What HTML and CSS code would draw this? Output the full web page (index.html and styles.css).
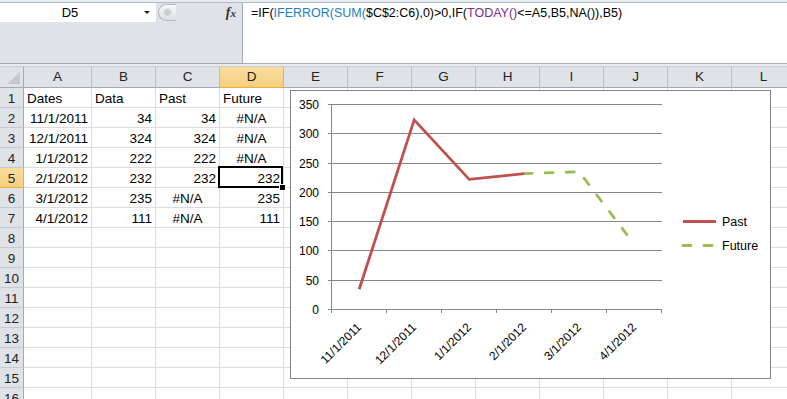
FILE: index.html
```html
<!DOCTYPE html>
<html>
<head>
    <title>Past / Future chart</title>
    <meta charset="UTF-8">
    <link rel="stylesheet" href="styles.css">
</head>
<body>
    <div class="top">
        <div class="bar">
            <div class="left">
                <div class="namerow">
                    <div class="namebox"><span class="name">D5</span><span class="drop"></span></div>
                    <div class="handle"><span class="dot"></span></div>
                    <div class="fx">f<i>x</i></div>
                </div>
            </div>
            <div class="formula">=IF(<span class="f1">IFERROR(SUM(</span>$C$2:C6),0)&gt;0,IF(<span class="f2">TODAY()</span>&lt;=A5,B5,NA()),B5)</div>
        </div>
    </div>

    <div class="sheet">
        <div class="corner"><span class="tri"></span></div>
        <div class="ch">A</div><div class="ch">B</div><div class="ch">C</div><div class="ch on">D</div><div class="ch">E</div><div class="ch">F</div><div class="ch">G</div><div class="ch">H</div><div class="ch">I</div><div class="ch">J</div><div class="ch">K</div><div class="ch">L</div>

        <div class="rh">1</div><div class="c">Dates</div><div class="c">Data</div><div class="c">Past</div><div class="c">Future</div><div class="c"></div><div class="c"></div><div class="c"></div><div class="c"></div><div class="c"></div><div class="c"></div><div class="c"></div><div class="c"></div>
        <div class="rh">2</div><div class="c r">11/1/2011</div><div class="c r">34</div><div class="c r">34</div><div class="c m">#N/A</div><div class="c"></div><div class="c"></div><div class="c"></div><div class="c"></div><div class="c"></div><div class="c"></div><div class="c"></div><div class="c"></div>
        <div class="rh">3</div><div class="c r">12/1/2011</div><div class="c r">324</div><div class="c r">324</div><div class="c m">#N/A</div><div class="c"></div><div class="c"></div><div class="c"></div><div class="c"></div><div class="c"></div><div class="c"></div><div class="c"></div><div class="c"></div>
        <div class="rh">4</div><div class="c r">1/1/2012</div><div class="c r">222</div><div class="c r">222</div><div class="c m">#N/A</div><div class="c"></div><div class="c"></div><div class="c"></div><div class="c"></div><div class="c"></div><div class="c"></div><div class="c"></div><div class="c"></div>
        <div class="rh on">5</div><div class="c r">2/1/2012</div><div class="c r">232</div><div class="c r">232</div><div class="c r">232</div><div class="c"></div><div class="c"></div><div class="c"></div><div class="c"></div><div class="c"></div><div class="c"></div><div class="c"></div><div class="c"></div>
        <div class="rh">6</div><div class="c r">3/1/2012</div><div class="c r">235</div><div class="c m">#N/A</div><div class="c r">235</div><div class="c"></div><div class="c"></div><div class="c"></div><div class="c"></div><div class="c"></div><div class="c"></div><div class="c"></div><div class="c"></div>
        <div class="rh">7</div><div class="c r">4/1/2012</div><div class="c r">111</div><div class="c m">#N/A</div><div class="c r">111</div><div class="c"></div><div class="c"></div><div class="c"></div><div class="c"></div><div class="c"></div><div class="c"></div><div class="c"></div><div class="c"></div>
        <div class="rh">8</div><div class="c"></div><div class="c"></div><div class="c"></div><div class="c"></div><div class="c"></div><div class="c"></div><div class="c"></div><div class="c"></div><div class="c"></div><div class="c"></div><div class="c"></div><div class="c"></div>
        <div class="rh">9</div><div class="c"></div><div class="c"></div><div class="c"></div><div class="c"></div><div class="c"></div><div class="c"></div><div class="c"></div><div class="c"></div><div class="c"></div><div class="c"></div><div class="c"></div><div class="c"></div>
        <div class="rh">10</div><div class="c"></div><div class="c"></div><div class="c"></div><div class="c"></div><div class="c"></div><div class="c"></div><div class="c"></div><div class="c"></div><div class="c"></div><div class="c"></div><div class="c"></div><div class="c"></div>
        <div class="rh">11</div><div class="c"></div><div class="c"></div><div class="c"></div><div class="c"></div><div class="c"></div><div class="c"></div><div class="c"></div><div class="c"></div><div class="c"></div><div class="c"></div><div class="c"></div><div class="c"></div>
        <div class="rh">12</div><div class="c"></div><div class="c"></div><div class="c"></div><div class="c"></div><div class="c"></div><div class="c"></div><div class="c"></div><div class="c"></div><div class="c"></div><div class="c"></div><div class="c"></div><div class="c"></div>
        <div class="rh">13</div><div class="c"></div><div class="c"></div><div class="c"></div><div class="c"></div><div class="c"></div><div class="c"></div><div class="c"></div><div class="c"></div><div class="c"></div><div class="c"></div><div class="c"></div><div class="c"></div>
        <div class="rh">14</div><div class="c"></div><div class="c"></div><div class="c"></div><div class="c"></div><div class="c"></div><div class="c"></div><div class="c"></div><div class="c"></div><div class="c"></div><div class="c"></div><div class="c"></div><div class="c"></div>
        <div class="rh">15</div><div class="c"></div><div class="c"></div><div class="c"></div><div class="c"></div><div class="c"></div><div class="c"></div><div class="c"></div><div class="c"></div><div class="c"></div><div class="c"></div><div class="c"></div><div class="c"></div>
        <div class="rh">16</div><div class="c"></div><div class="c"></div><div class="c"></div><div class="c"></div><div class="c"></div><div class="c"></div><div class="c"></div><div class="c"></div><div class="c"></div><div class="c"></div><div class="c"></div><div class="c"></div>
    </div>

    <!-- active cell D5 -->
    <div class="cursor"><span class="fill"></span></div>

    <div class="chart">
        <svg width="479" height="287" viewBox="291 91 479 287">
            <g class="grid">
                <line x1="327.5" y1="104.5" x2="661.5" y2="104.5"/>
                <line x1="327.5" y1="133.5" x2="661.5" y2="133.5"/>
                <line x1="327.5" y1="163.5" x2="661.5" y2="163.5"/>
                <line x1="327.5" y1="192.5" x2="661.5" y2="192.5"/>
                <line x1="327.5" y1="221.5" x2="661.5" y2="221.5"/>
                <line x1="327.5" y1="250.5" x2="661.5" y2="250.5"/>
                <line x1="327.5" y1="280.5" x2="661.5" y2="280.5"/>
                <line x1="327.5" y1="309.5" x2="661.5" y2="309.5"/>
                <line x1="331.5" y1="104.5" x2="331.5" y2="313"/>
                <line x1="386.5" y1="309.5" x2="386.5" y2="313"/>
                <line x1="441.5" y1="309.5" x2="441.5" y2="313"/>
                <line x1="496.5" y1="309.5" x2="496.5" y2="313"/>
                <line x1="551.5" y1="309.5" x2="551.5" y2="313"/>
                <line x1="606.5" y1="309.5" x2="606.5" y2="313"/>
                <line x1="661.5" y1="309.5" x2="661.5" y2="313"/>
            </g>
            <g class="ylab">
                <text x="319" y="109">350</text>
                <text x="319" y="138">300</text>
                <text x="319" y="168">250</text>
                <text x="319" y="197">200</text>
                <text x="319" y="226">150</text>
                <text x="319" y="255">100</text>
                <text x="319" y="285">50</text>
                <text x="319" y="314">0</text>
            </g>
            <g class="xlab">
                <text transform="translate(362 328) rotate(-45)">11/1/2011</text>
                <text transform="translate(417 328) rotate(-45)">12/1/2011</text>
                <text transform="translate(472 328) rotate(-45)">1/1/2012</text>
                <text transform="translate(527 328) rotate(-45)">2/1/2012</text>
                <text transform="translate(582 328) rotate(-45)">3/1/2012</text>
                <text transform="translate(637 328) rotate(-45)">4/1/2012</text>
            </g>
            <polyline class="future" points="524.2,173.6 579.2,171.8 634.2,244.2"/>
            <polyline class="past" points="359.2,289.2 414.2,119.9 469.2,179.4 524.2,173.6"/>

            <line class="past" x1="683" y1="221.5" x2="716" y2="221.5"/>
            <text class="leg" x="722" y="226">Past</text>
            <line class="future" x1="683" y1="245.5" x2="716" y2="245.5" stroke-dasharray="10 10"/>
            <text class="leg" x="722" y="250">Future</text>
        </svg>
    </div>
</body>
</html>
```

FILE: styles.css
```css
body {
    margin: 0;
    overflow: hidden;
    background: #fff;
    font-family: "Liberation Sans", Arial, sans-serif;
    color: #000;
}
.top {
    height: 67px;
    box-sizing: border-box;
    padding-top: 2px;
    background: #e8ebef;
    border-bottom: 1px solid #c9ced4;
}
.bar {
    height: 62px;
    box-sizing: border-box;
    display: flex;
    border-top: 1px solid #b4bac2;
    border-bottom: 1px solid #a3aab3;
    background: #dfe3e9;
}
.left {
    width: 242px;
}
.namerow {
    display: flex;
    height: 19px;
}
.namebox {
    width: 156px;
    display: flex;
    align-items: center;
    background: #fff;
}
.name {
    flex: 1;
    text-align: center;
    font-size: 13px;
    padding-left: 2px;
}
.drop {
    width: 18px;
    display: flex;
    justify-content: center;
}
.drop::after {
    content: "";
    border-left: 3px solid transparent;
    border-right: 3px solid transparent;
    border-top: 3px solid #222;
}
.handle {
    width: 18px;
    height: 17px;
    margin: 1px 0 0 2px;
    box-sizing: border-box;
    border: 1px solid #b3b8bf;
    border-right: none;
    border-radius: 9px 0 0 9px;
    background: linear-gradient(#f7f8f9, #dde1e6);
    display: flex;
    align-items: center;
    padding-left: 4px;
}
.dot {
    width: 7px;
    height: 7px;
    border-radius: 50%;
    background: #c9cdd2;
    border: 1px solid #e6e8eb;
}
.fx {
    margin-left: auto;
    margin-right: 6px;
    font-family: "Liberation Serif", serif;
    font-style: italic;
    font-weight: bold;
    font-size: 14px;
    line-height: 19px;
    color: #333;
}
.fx i {
    font-size: 11px;
}
.formula {
    flex: 1;
    background: #fff;
    border-left: 1px solid #a3aab3;
    font-size: 12.5px;
    line-height: 15px;
    padding: 3px 0 0 8px;
    white-space: nowrap;
}
.f1 {
    color: #1c7fc0;
}
.f2 {
    color: #7a2c8e;
}

.sheet {
    display: grid;
    grid-template-columns: 24px 68px repeat(11, 64px);
    grid-template-rows: 21px repeat(16, 20px);
    font-size: 13.5px;
}
.sheet > div {
    box-sizing: border-box;
    display: flex;
    align-items: flex-end;
    line-height: 16px;
    white-space: nowrap;
    overflow: hidden;
}
.c {
    border-right: 1px solid #dadcdd;
    border-bottom: 1px solid #dadcdd;
    padding: 0 3px;
}
.r {
    justify-content: flex-end;
}
.m {
    justify-content: center;
}
.corner {
    background: #dfe3e8;
    border-right: 1px solid #a3aab3;
    border-bottom: 1px solid #a3aab3;
    justify-content: flex-end;
    padding: 0 3px 3px 0;
}
.tri {
    width: 0;
    height: 0;
    border-left: 13px solid transparent;
    border-bottom: 12px solid #c4c9cf;
}
.ch {
    background: #dfe3e8;
    border-right: 1px solid #b9bfc6;
    border-bottom: 1px solid #a3aab3;
    justify-content: center;
    padding-bottom: 2px;
    color: #222;
}
.rh {
    background: #dfe3e8;
    border-right: 1px solid #a3aab3;
    border-bottom: 1px solid #c5cad1;
    justify-content: center;
    color: #222;
}
.ch.on,
.rh.on {
    background: linear-gradient(#f9dd9f, #f6cf7e);
    border-color: #e9b13c;
}

.cursor {
    position: absolute;
    left: 218px;
    top: 166px;
    width: 65px;
    height: 22px;
    box-sizing: border-box;
    border: 2px solid #000;
}
.fill {
    position: absolute;
    right: -5px;
    bottom: -5px;
    width: 5px;
    height: 5px;
    background: #000;
    border: 1px solid #fff;
}

.chart {
    position: absolute;
    left: 290px;
    top: 90px;
    width: 481px;
    height: 289px;
    box-sizing: border-box;
    border: 1px solid #868686;
    background: #fff;
}
.chart svg {
    display: block;
}
.grid line {
    stroke: #868686;
    stroke-width: 1;
    shape-rendering: crispEdges;
}
.chart text {
    font-family: "Liberation Sans", Arial, sans-serif;
    font-size: 12px;
    fill: #000;
}
.ylab text,
.xlab text {
    text-anchor: end;
}
.past {
    fill: none;
    stroke: #c0504d;
    stroke-width: 2.8;
}
.future {
    fill: none;
    stroke: #9bbb59;
    stroke-width: 2.8;
    stroke-linecap: round;
    stroke-dasharray: 8 13;
}
.chart .leg {
    font-size: 12.5px;
}
```
